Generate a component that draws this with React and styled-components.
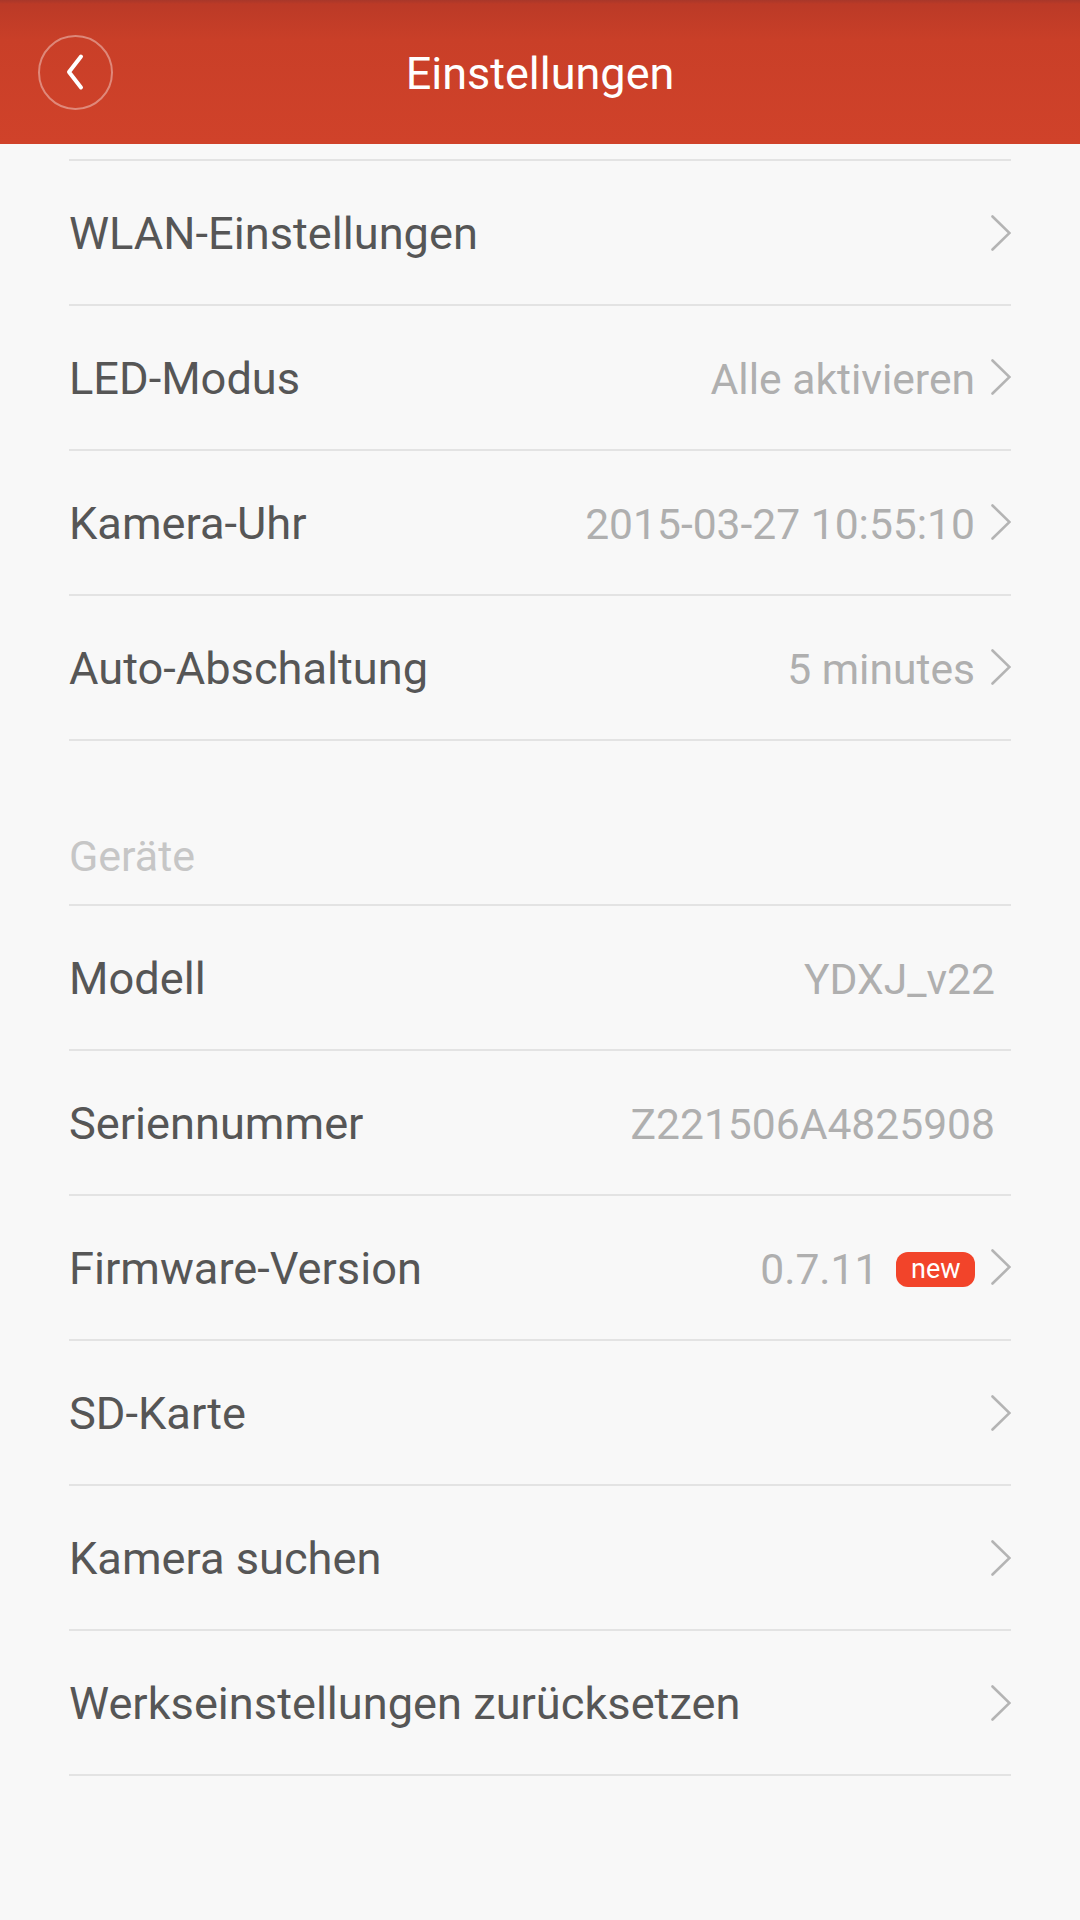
import React from "react";
import styled, { createGlobalStyle } from "styled-components";

const GlobalStyle = createGlobalStyle`
  html, body { margin: 0; padding: 0; background: #f8f8f8; }
  body { font-family: Roboto, "Noto Sans", "Liberation Sans", sans-serif; -webkit-font-smoothing: antialiased; }
  * { box-sizing: border-box; }
`;

const Page = styled.div`
  width: 1080px;
  min-height: 1920px;
  background: #f8f8f8;
`;

const Header = styled.header`
  height: 144px;
  display: grid;
  grid-template-columns: 150px 1fr 150px;
  align-items: center;
  background: linear-gradient(180deg, #a8372a 0px, #bb3a27 4px, #c93f28 40px, #d0422a 100%);
`;

const BackButton = styled.button`
  width: 75px;
  height: 75px;
  margin-left: 38px;
  padding: 0;
  border-radius: 50%;
  border: 2px solid rgba(255, 255, 255, 0.38);
  background: transparent;
  display: flex;
  align-items: center;
  justify-content: center;
  cursor: pointer;
`;

const Title = styled.h1`
  margin: 0;
  padding-top: 4px;
  text-align: center;
  color: #ffffff;
  font-size: 45px;
  font-weight: 400;
  line-height: 1.2;
`;

const List = styled.div`
  padding: 0 69px;
`;

const CutEdge = styled.div`
  height: 17px;
  border-bottom: 2px solid #e3e3e3;
`;

const Row = styled.div`
  height: 145px;
  padding-top: 4px;
  display: flex;
  align-items: center;
  justify-content: space-between;
  border-bottom: 2px solid #e3e3e3;
`;

const Label = styled.span`
  font-size: 45.2px;
  color: #565656;
  line-height: 1.2;
`;

const Right = styled.div`
  display: flex;
  align-items: center;
  gap: 16px;
  padding-right: ${(p) => (p.$chevron ? "0" : "16px")};
`;

const Value = styled.span`
  font-size: 42.6px;
  color: #afafaf;
  line-height: 1.2;
`;

const Badge = styled.span`
  height: 35px;
  padding: 0 14.5px;
  border-radius: 12px;
  background: #f2442a;
  color: #ffffff;
  font-size: 27px;
  line-height: 35px;
  display: inline-flex;
  align-items: center;
  margin-left: 2px;
`;

const Section = styled.div`
  height: 165px;
  padding-top: 68px;
  display: flex;
  align-items: center;
  border-bottom: 2px solid #e3e3e3;
  font-size: 43px;
  color: #c6c6c6;
  line-height: 1.2;
`;

const ChevronSvg = styled.svg`
  display: block;
  flex: none;
  margin-top: -4px;
`;

const Chevron = () => (
  <ChevronSvg width="20" height="36" viewBox="0 0 20 36" aria-hidden="true">
    <polyline
      points="1.5,1.5 18.5,18 1.5,34.5"
      fill="none"
      stroke="#b4b4b4"
      strokeWidth="2.6"
      strokeLinecap="round"
      strokeLinejoin="miter"
    />
  </ChevronSvg>
);

const BackIcon = () => (
  <svg width="28" height="40" viewBox="0 0 28 40" aria-hidden="true">
    <polyline
      points="19,4.5 7,20 19,35.5"
      fill="none"
      stroke="#ffffff"
      strokeWidth="4"
      strokeLinecap="round"
      strokeLinejoin="round"
    />
  </svg>
);

const SettingRow = ({ label, value, badge, chevron = true }) => (
  <Row>
    <Label>{label}</Label>
    <Right $chevron={chevron}>
      {value && <Value>{value}</Value>}
      {badge && <Badge>{badge}</Badge>}
      {chevron && <Chevron />}
    </Right>
  </Row>
);

export default function App() {
  return (
    <Page>
      <GlobalStyle />
      <Header>
        <BackButton aria-label="Zurück">
          <BackIcon />
        </BackButton>
        <Title>Einstellungen</Title>
        <span />
      </Header>
      <List>
        <CutEdge />
        <SettingRow label="WLAN-Einstellungen" />
        <SettingRow label="LED-Modus" value="Alle aktivieren" />
        <SettingRow label="Kamera-Uhr" value="2015-03-27 10:55:10" />
        <SettingRow label="Auto-Abschaltung" value="5 minutes" />
        <Section>Geräte</Section>
        <SettingRow label="Modell" value="YDXJ_v22" chevron={false} />
        <SettingRow label="Seriennummer" value="Z221506A4825908" chevron={false} />
        <SettingRow label="Firmware-Version" value="0.7.11" badge="new" />
        <SettingRow label="SD-Karte" />
        <SettingRow label="Kamera suchen" />
        <SettingRow label="Werkseinstellungen zurücksetzen" />
      </List>
    </Page>
  );
}
